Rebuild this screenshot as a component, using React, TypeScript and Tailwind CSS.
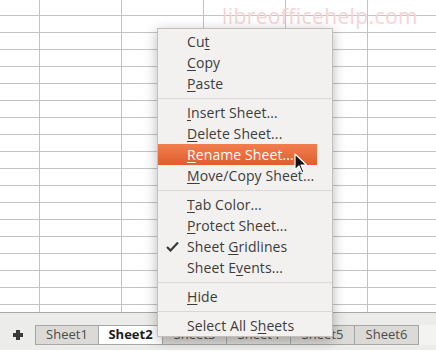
import React from 'react'

type Item = { pre: string; key: string; post: string; checked?: boolean; active?: boolean }
type Entry = Item | 'sep'

const MENU: Entry[] = [
  { pre: 'Cu', key: 't', post: '' },
  { pre: '', key: 'C', post: 'opy' },
  { pre: '', key: 'P', post: 'aste' },
  'sep',
  { pre: '', key: 'I', post: 'nsert Sheet...' },
  { pre: '', key: 'D', post: 'elete Sheet...' },
  { pre: '', key: 'R', post: 'ename Sheet...', active: true },
  { pre: '', key: 'M', post: 'ove/Copy Sheet...' },
  'sep',
  { pre: '', key: 'T', post: 'ab Color...' },
  { pre: '', key: 'P', post: 'rotect Sheet...' },
  { pre: 'Sheet ', key: 'G', post: 'ridlines', checked: true },
  { pre: 'Sheet E', key: 'v', post: 'ents...' },
  'sep',
  { pre: '', key: 'H', post: 'ide' },
  'sep',
  { pre: 'Select All S', key: 'h', post: 'eets' },
]

const TABS = ['Sheet1', 'Sheet2', 'Sheet3', 'Sheet4', 'Sheet5', 'Sheet6']

function Grid() {
  const rows = Array.from({ length: 19 })
  const cols = Array.from({ length: 5 })
  return (
    <div className="flex h-[313px] flex-col overflow-hidden border-b border-[#a9a9a9] bg-white">
      {rows.map((_, r) => (
        <div key={r} className={`flex shrink-0 ${r === 0 ? 'h-[16px]' : 'h-[17px]'}`}>
          <div className="h-full w-[40px] shrink-0 border-b border-r border-[#c3c3c3]" />
          {cols.map((_, c) => (
            <div key={c} className="h-full w-[82px] shrink-0 border-b border-r border-[#c3c3c3]" />
          ))}
        </div>
      ))}
    </div>
  )
}

function TabBar() {
  return (
    <div className="flex h-[37px] flex-col bg-[#ececeb] pt-[12px]">
      <div className="flex h-[20px] items-stretch">
        <div className="flex w-[35px] items-center justify-center">
          <svg width="10" height="10" viewBox="0 0 10 10">
            <path d="M3 0h4v3h3v4H7v3H3V7H0V3h3z" fill="#3a3a3a" />
          </svg>
        </div>
        {TABS.map((t, i) => (
          <div
            key={t}
            className={`flex w-[64px] items-center justify-center border-y border-r border-[#a6a6a6] text-[13px] ${
              i === 0 ? 'border-l' : ''
            } ${i === 1 ? 'bg-white font-bold text-[#1e1e1e]' : 'bg-[#dcdad7] text-[#4c4c4c]'}`}
          >
            {t}
          </div>
        ))}
        <div className="flex-1 bg-[#f3f3f2]" />
      </div>
    </div>
  )
}

function ContextMenu() {
  return (
    <div className="absolute left-[157px] top-[28px] w-[176px] border border-[#c2c0bb] bg-[#f2f1f0] pt-[2px] text-[14px] tracking-[0.1px] text-[#3c3c3c] shadow-[0_3px_12px_rgba(0,0,0,0.28)]">
      {MENU.map((e, i) =>
        e === 'sep' ? (
          <div key={i} className="flex h-[8px] flex-col justify-center">
            <div className="h-px bg-[#dad8d4]" />
          </div>
        ) : (
          <div
            key={i}
            className={`relative flex h-[21px] items-center pl-[29px] ${
              e.active ? 'mr-[15px] bg-gradient-to-b from-[#f27e4f] to-[#df5f2d] text-white' : ''
            }`}
          >
            {e.checked && (
              <svg className="absolute left-[8px] top-[5px]" width="13" height="11" viewBox="0 0 13 11">
                <path d="M1 6l3.5 3.5L12 1.5" fill="none" stroke="#3c3c3c" strokeWidth="2.2" />
              </svg>
            )}
            <span>
              {e.pre}
              <span className="underline decoration-1 underline-offset-[2px]">{e.key}</span>
              {e.post}
            </span>
          </div>
        ),
      )}
    </div>
  )
}

export default function App() {
  return (
    <div
      className="relative h-[351px] w-[436px] overflow-hidden bg-white"
      style={{ fontFamily: '"Open Sans", "DejaVu Sans", sans-serif' }}
    >
      <Grid />
      <TabBar />
      <div className="absolute left-[222px] top-[1px] text-[21px] tracking-[0.4px] text-[#f7d3d3]">
        libreofficehelp.com
      </div>
      <ContextMenu />
      <svg className="absolute left-[294px] top-[153px]" width="13" height="21" viewBox="0 0 13 21">
        <path d="M1 1v16l4-4 3 7 2-1-3-7h5.5z" fill="#111" stroke="#fff" strokeWidth="1.2" strokeLinejoin="round" />
      </svg>
    </div>
  )
}
